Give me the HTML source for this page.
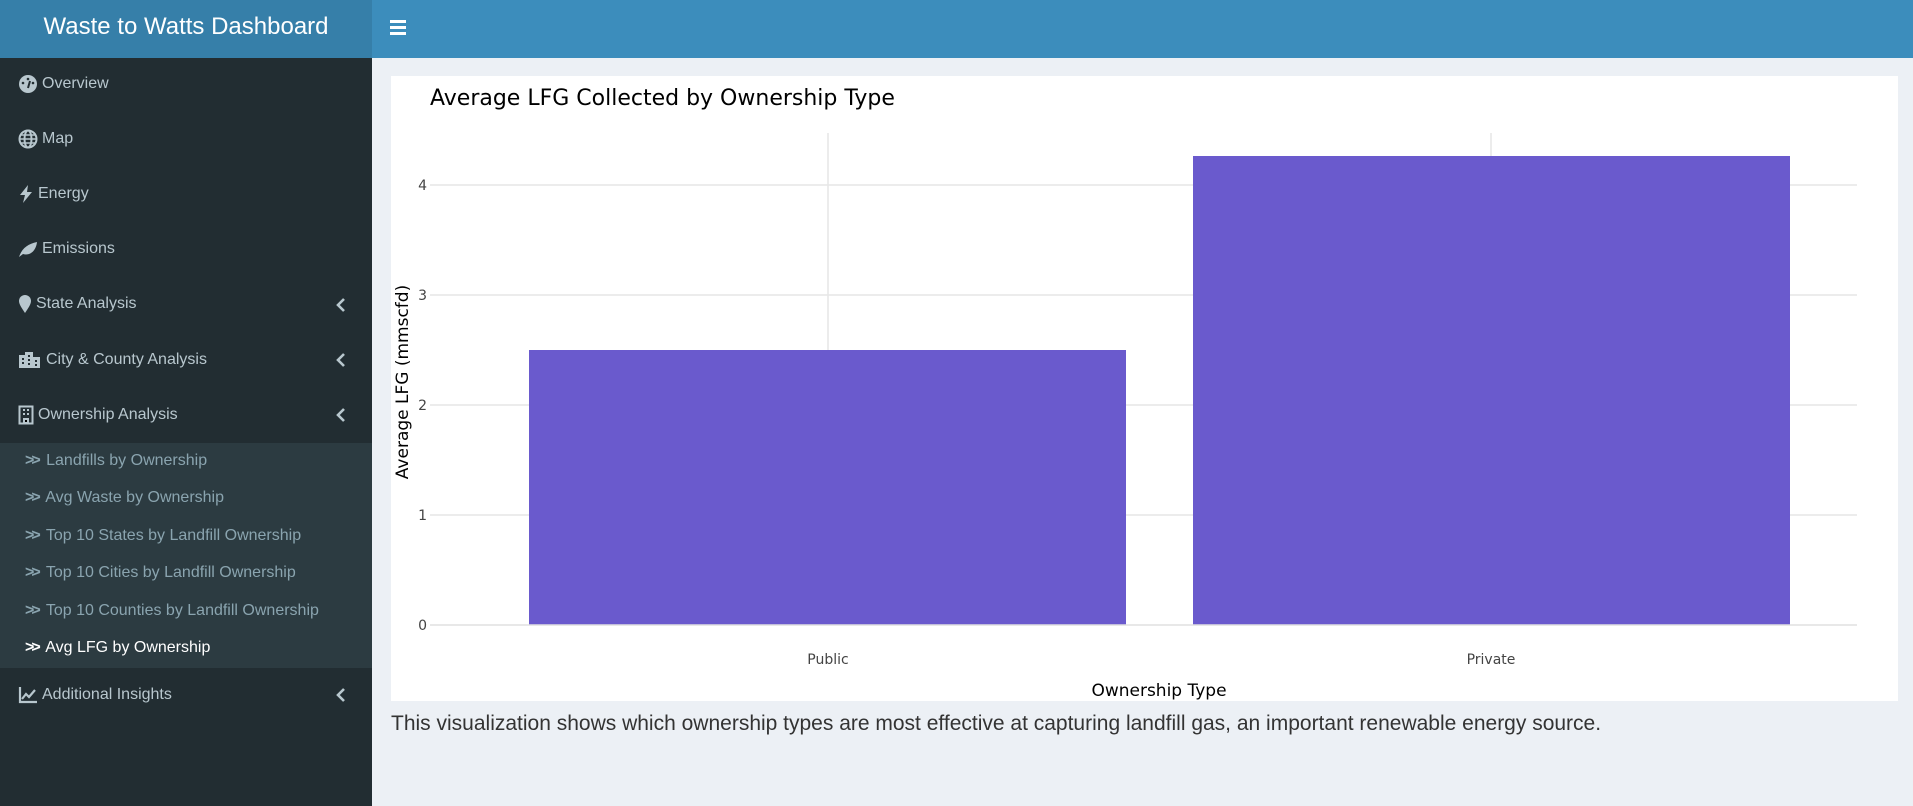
<!DOCTYPE html>
<html><head><meta charset="utf-8"><style>
*{margin:0;padding:0;box-sizing:border-box}
body{width:1913px;height:806px;overflow:hidden;background:#ecf0f5;font-family:"Liberation Sans",sans-serif;position:relative}
.logo{position:absolute;left:0;top:0;width:372px;height:58px;background:#367fa9;color:#fff;font-size:24px;text-align:center;line-height:54px}
.nav{position:absolute;left:372px;top:0;right:0;height:58px;background:#3c8dbc}
.burger{position:absolute;left:18px;top:20px;width:16px}
.burger i{display:block;height:2.5px;background:#fff;margin-bottom:3.5px}
.side{position:absolute;left:0;top:58px;width:372px;bottom:0;background:#222d32}
.item{position:absolute;left:18px;color:#b8c7ce;font-size:16px;height:24px;line-height:24px;display:flex;align-items:center}
.item svg{margin-right:4px}
.chev{position:absolute;left:336px;width:10px;height:24px}
.sub{position:absolute;left:0;top:385px;width:372px;height:225px;background:#2c3b41}
.si{position:absolute;left:25px;color:#8aa4af;font-size:16px;height:22px;line-height:22px}
.si b{font-weight:bold;margin-right:4px;letter-spacing:-3px}
.box{position:absolute;left:391px;top:76px;width:1507px;height:625px;background:#fff}
.cap{position:absolute;left:391px;top:712px;font-size:21px;color:#333}
</style></head><body>
<div class="logo">Waste to Watts Dashboard</div>
<div class="nav"><div class="burger"><i></i><i></i><i></i></div></div>
<div class="side">
<div class="item" style="top:14px"><svg width="20" height="20" viewBox="0 0 20 20"><circle cx="10" cy="10" r="9" fill="#b8c7ce"/><circle cx="10" cy="5" r="1.3" fill="#222d32"/><circle cx="5" cy="9" r="1.3" fill="#222d32"/><circle cx="15" cy="9" r="1.3" fill="#222d32"/><path d="M10 14 L12 7" stroke="#222d32" stroke-width="2"/></svg>Overview</div>
<div class="item" style="top:69px"><svg width="20" height="20" viewBox="0 0 20 20"><circle cx="10" cy="10" r="8.5" fill="none" stroke="#b8c7ce" stroke-width="2"/><ellipse cx="10" cy="10" rx="3.5" ry="8.5" fill="none" stroke="#b8c7ce" stroke-width="2"/><path d="M2 10h16M3 6h14M3 14h14" stroke="#b8c7ce" stroke-width="1.5"/></svg>Map</div>
<div class="item" style="top:124px"><svg width="16" height="20" viewBox="0 0 16 20"><path d="M10 1 L2 11 H7 L5 19 L14 8 H9 Z" fill="#b8c7ce"/></svg>Energy</div>
<div class="item" style="top:179px"><svg width="20" height="18" viewBox="0 0 20 18"><path d="M1 17 C4 8 10 4 19 2 C18 11 12 16 5 14 Z" fill="#b8c7ce"/></svg>Emissions</div>
<div class="item" style="top:234px"><svg width="14" height="20" viewBox="0 0 14 20"><path d="M7 19 C3 13 1 10 1 7 A6 6 0 0 1 13 7 C13 10 11 13 7 19Z" fill="#b8c7ce"/></svg>State Analysis</div>
<svg class="chev" style="top:235px" viewBox="0 0 10 24"><path d="M8 6 L2 12 L8 18" fill="none" stroke="#b8c7ce" stroke-width="2.6"/></svg>
<div class="item" style="top:290px"><svg width="24" height="18" viewBox="0 0 24 18"><path d="M1 4h6v-3h8v5h7v11H1z" fill="#b8c7ce"/><path d="M4 8h2M4 12h2M10 5h2M10 9h2M10 13h2M17 10h2M17 14h2" stroke="#222d32" stroke-width="2"/></svg>City &amp; County Analysis</div>
<svg class="chev" style="top:290px" viewBox="0 0 10 24"><path d="M8 6 L2 12 L8 18" fill="none" stroke="#b8c7ce" stroke-width="2.6"/></svg>
<div class="item" style="top:345px"><svg width="16" height="20" viewBox="0 0 16 20"><rect x="1.5" y="1.5" width="13" height="17" fill="none" stroke="#b8c7ce" stroke-width="2"/><path d="M5 5h2M9 5h2M5 9h2M9 9h2M6 14h4v4h-4z" stroke="#b8c7ce" stroke-width="2"/></svg>Ownership Analysis</div>
<svg class="chev" style="top:345px" viewBox="0 0 10 24"><path d="M8 6 L2 12 L8 18" fill="none" stroke="#b8c7ce" stroke-width="2.6"/></svg>
<div class="sub">
<div class="si" style="top:7px"><b>&gt;&gt;</b> Landfills by Ownership</div>
<div class="si" style="top:44px"><b>&gt;&gt;</b> Avg Waste by Ownership</div>
<div class="si" style="top:82px"><b>&gt;&gt;</b> Top 10 States by Landfill Ownership</div>
<div class="si" style="top:119px"><b>&gt;&gt;</b> Top 10 Cities by Landfill Ownership</div>
<div class="si" style="top:157px"><b>&gt;&gt;</b> Top 10 Counties by Landfill Ownership</div>
<div class="si" style="top:194px;color:#fff"><b>&gt;&gt;</b> Avg LFG by Ownership</div>
</div>
<div class="item" style="top:625px"><svg width="20" height="18" viewBox="0 0 20 18"><path d="M2 1v15h17" fill="none" stroke="#b8c7ce" stroke-width="2.2"/><path d="M4 13l4-5 3 3 6-7" fill="none" stroke="#b8c7ce" stroke-width="2.2"/></svg>Additional Insights</div>
<svg class="chev" style="top:625px" viewBox="0 0 10 24"><path d="M8 6 L2 12 L8 18" fill="none" stroke="#b8c7ce" stroke-width="2.6"/></svg>
</div>
<div class="box"></div>
<svg style="position:absolute;left:0;top:0" width="1913" height="806" font-family="DejaVu Sans, sans-serif">
<text x="430" y="105" font-size="22" fill="#000">Average LFG Collected by Ownership Type</text>
<g stroke="#e6e6e6" stroke-width="1.5">
<line x1="430" y1="185" x2="1857" y2="185"/><line x1="430" y1="295" x2="1857" y2="295"/><line x1="430" y1="405" x2="1857" y2="405"/><line x1="430" y1="515" x2="1857" y2="515"/>
<line x1="828" y1="133" x2="828" y2="625"/><line x1="1491" y1="133" x2="1491" y2="625"/>
</g>
<rect x="529" y="350" width="597" height="275" fill="#6a5acd"/>
<rect x="1193" y="156" width="597" height="469" fill="#6a5acd"/>
<line x1="430" y1="625" x2="1857" y2="625" stroke="#e0e0e0" stroke-width="1.5"/>
<g font-size="14" fill="#444" text-anchor="end">
<text x="427" y="190">4</text><text x="427" y="300">3</text><text x="427" y="410">2</text><text x="427" y="520">1</text><text x="427" y="630">0</text>
</g>
<g font-size="14" fill="#444" text-anchor="middle"><text x="828" y="664">Public</text><text x="1491" y="664">Private</text></g>
<text x="1159" y="696" font-size="17" text-anchor="middle" fill="#000">Ownership Type</text>
<text transform="translate(408,382) rotate(-90)" font-size="17" text-anchor="middle" fill="#000">Average LFG (mmscfd)</text>
</svg>
<div class="cap">This visualization shows which ownership types are most effective at capturing landfill gas, an important renewable energy source.</div>
</body></html>
